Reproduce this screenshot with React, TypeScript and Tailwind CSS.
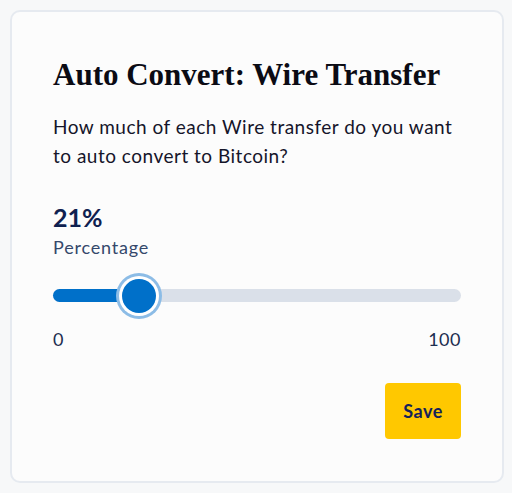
export default function App() {
  const value = 21;
  return (
    <div className="min-h-screen bg-[#f7f8f9] pl-[10px] pr-[8px] pt-[10px] pb-[10px]" style={{ fontFamily: "Lato, 'Noto Sans', sans-serif" }}>
      <div className="rounded-[10px] border-2 border-[#e6eaf0] bg-[#fcfcfc] px-[41px] pb-[42px] pt-[45px]">
        <h1 className="text-[31px] font-bold leading-[36px] text-[#0b0b14]" style={{ fontFamily: "'Liberation Serif', serif" }}>
          Auto Convert: Wire Transfer
        </h1>
        <p className="mt-[19px] text-[19px] leading-[29px] tracking-[0.5px] text-[#15152a]">
          How much of each Wire transfer do you want to auto convert to Bitcoin?
        </p>

        <div className="mt-[32px] text-[25px] font-bold leading-[30px] text-[#0f2150]">{value}%</div>
        <div className="mt-[4px] text-[18px] leading-[22px] tracking-[0.8px] text-[#35486b]">Percentage</div>

        <div className="relative mt-[31px] h-[13px] rounded-full bg-[#dae0e9]">
          <div className="h-full rounded-full bg-[#0070c9]" style={{ width: `${value}%` }} />
          <div
            className="absolute top-1/2 h-[34px] w-[34px] -translate-x-1/2 -translate-y-1/2 rounded-full bg-[#0070c9] shadow-[0_0_0_3px_#ffffff,0_0_0_6px_#8cbce6]"
            style={{ left: `${value}%` }}
          />
        </div>

        <div className="mt-[26px] flex justify-between text-[18px] leading-[22px] tracking-[0.5px] text-[#1c2e50]">
          <span>0</span>
          <span>100</span>
        </div>

        <div className="mt-[33px] flex justify-end">
          <button className="h-[56px] w-[76px] rounded-[4px] bg-[#ffc800] text-[18px] font-bold tracking-[0.5px] text-[#14215a]">
            Save
          </button>
        </div>
      </div>
    </div>
  );
}
